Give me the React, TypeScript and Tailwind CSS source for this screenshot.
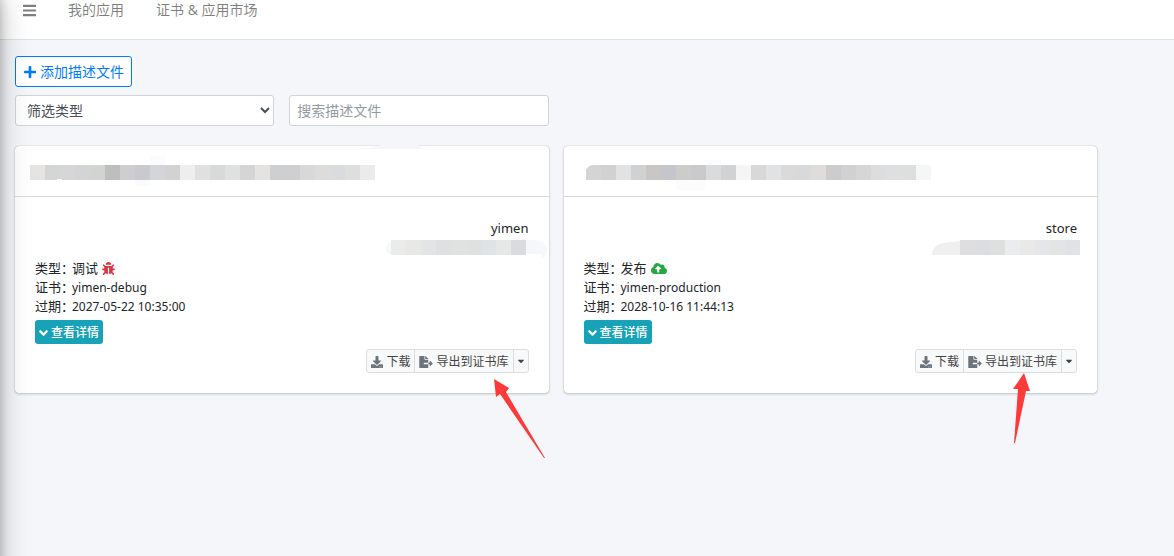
import type { ReactNode } from "react";
import {
  FaAngleDown,
  FaBars,
  FaBug,
  FaCaretDown,
  FaCloudUploadAlt,
  FaDownload,
  FaFileExport,
  FaPlus,
} from "react-icons/fa";

type Profile = {
  name: string;
  kind: string;
  icon: ReactNode;
  cert: string;
  expires: string;
  title: ReactNode;
  team: ReactNode;
  pointer: ReactNode;
};

const CELL = 15;

function Cells({ colors, x = 0, y = 0 }: { colors: string[]; x?: number; y?: number }) {
  return (
    <g shapeRendering="crispEdges">
      {colors.map((fill, i) => (
        <rect key={i} x={x + i * CELL} y={y} width={CELL} height={CELL} fill={fill} />
      ))}
    </g>
  );
}

const debugTitle = [
  "#e6e4e2", "#d4d6d5", "#d6d6d8", "#d3d4d6", "#d2d4d2", "#bebebe", "#cecece", "#c8cacf",
  "#d4d5d8", "#d2d2d2", "#eeeeee", "#e0e0e1", "#d8dad9", "#dfe1e0", "#d5d5d5", "#e5e3e1",
  "#cecfd1", "#cfcfd1", "#d8d8d8", "#dedcda", "#d8dcdf", "#dedede", "#ebebeb",
];

const storeTitle = [
  "#d4d4d4", "#d1d1d1", "#e1e2e4", "#cfd1d3", "#c9c6c4", "#c5c6cc", "#cccccb", "#cacacc",
  "#dadbdd", "#d1d2d4", "#f5f5f5", "#d8d8d8", "#e1e2e4", "#dadada", "#d8d9db", "#dfdcd9",
  "#cccccf", "#cfd1d3", "#d6d6d6", "#dddddd", "#dddfe1", "#dddfde", "#f5f7f6",
];

const profiles: Profile[] = [
  {
    name: "yimen",
    kind: "调试",
    icon: <FaBug className="size-[13px] text-[#dc3545]" />,
    cert: "yimen-debug",
    expires: "2027-05-22 10:35:00",
    title: (
      <svg aria-hidden className="ml-[15px] h-[15px] w-[345px] overflow-visible">
        <path d="M326 -16q14 -1 26 -4h36l6 4z" fill="#f4f6f9" />
        <rect x="120" y="-9" width="15" height="9" fill="#fcfcfc" />
        <rect x="105" y="15" width="15" height="6" fill="#fafbfc" />
        <Cells colors={debugTitle} />
        <rect x="27" y="14" width="5" height="1" fill="#fff" />
      </svg>
    ),
    team: (
      <svg aria-hidden className="-mr-[17px] h-[15px] w-40 overflow-visible">
        <path d="M5 14Q0 14 0 8Q2 1 10 0H150Q159 1 161 9Q161 15 156 18V14z" fill="#f6f7fa" />
        <Cells
          x={5}
          colors={["#e9eceb", "#e8e8e7", "#e3e4e6", "#dfe0e2", "#e0e2e1", "#dfe0e0", "#dfe3e6", "#e6e8e7", "#d9dcdf"]}
        />
      </svg>
    ),
    pointer: (
      <svg
        aria-hidden
        viewBox="0 0 52 80"
        className="pointer-events-none absolute right-1 top-[233px] h-20 w-[52px]"
      >
        <path d="M1 0L16 9L13 13L52 79L51 79L7 15L3 18z" fill="#fd3a3a" />
      </svg>
    ),
  },
  {
    name: "store",
    kind: "发布",
    icon: <FaCloudUploadAlt className="h-[13px] w-4 text-[#28a745]" />,
    cert: "yimen-production",
    expires: "2028-10-16 11:44:13",
    title: (
      <svg aria-hidden className="ml-[22px] h-[15px] w-[345px] overflow-visible">
        <rect x="120" y="-5" width="15" height="5" fill="#fcfcfc" />
        <rect x="90" y="15" width="30" height="10" fill="#fcfcfc" />
        <Cells colors={storeTitle} />
        <path d="M0 0H6Q2 1 0 5z" fill="#fff" />
      </svg>
    ),
    team: (
      <svg aria-hidden className="-mr-[3px] h-[15px] w-[148px] overflow-visible">
        <path d="M0 15Q0 5 11 3L28 1V15z" fill="#efeff0" />
        <Cells
          x={28}
          colors={["#dedee0", "#dadee1", "#dedfdf", "#ebecee", "#e9e9e8", "#e5e6ea", "#e3e4e3", "#e1e2e7"]}
        />
      </svg>
    ),
    pointer: (
      <svg
        aria-hidden
        viewBox="0 0 18 70"
        className="pointer-events-none absolute right-[66px] top-[227px] h-[70px] w-[18px]"
      >
        <path d="M11 0L17 18L13 18L2 70L1 70L5 16L0 16z" fill="#fd3a3a" />
      </svg>
    ),
  },
];

function Row({ label, children }: { label: string; children: ReactNode }) {
  return (
    <div className="flex h-[19px] items-center">
      <dt className="w-[37px] whitespace-nowrap text-[13px]">{label}{"\uff1a"}</dt>
      <dd className="flex items-center gap-1">{children}</dd>
    </div>
  );
}

function ProfileCard({ profile }: { profile: Profile }) {
  return (
    <article className="relative rounded bg-white shadow-[0_0_1px_rgba(0,0,0,0.3),0_1px_3px_rgba(0,0,0,0.2)]">
      <header className="flex h-[51px] items-center border-b border-black/15 pt-[2px]">
        {profile.title}
      </header>
      <div className="p-5">
        <h2 className="text-right text-[13px] leading-[22px]">{profile.name}</h2>
        <div className="flex h-5 justify-end pt-px">{profile.team}</div>
        <dl>
          <Row label="类型">
            <span className="text-[13px]">{profile.kind}</span>
            {profile.icon}
          </Row>
          <Row label="证书">
            <span className="text-xs">{profile.cert}</span>
          </Row>
          <Row label="过期">
            <span className="text-xs">{profile.expires}</span>
          </Row>
        </dl>
        <button
          type="button"
          className="mt-1 flex h-6 items-center gap-[3px] rounded-[3px] bg-[#17a2b8] px-1 pt-0.5 text-xs font-medium text-white"
        >
          <FaAngleDown className="h-[14px] w-[9px]" />
          查看详情
        </button>
        <div className="mt-[5px] flex h-6 justify-end text-xs text-[#444]">
          <button
            type="button"
            className="flex items-center gap-[3px] rounded-l-[3px] border border-[#ddd] bg-[#f8f9fa] px-1 pt-0.5"
          >
            <FaDownload className="size-3 text-[#6c757d]" />
            下载
          </button>
          <button
            type="button"
            className="-ml-px flex items-center gap-[3px] border border-[#ddd] bg-[#f8f9fa] px-1 pt-0.5"
          >
            <FaFileExport className="h-3 w-[14px] text-[#6c757d]" />
            导出到证书库
          </button>
          <button
            type="button"
            aria-label="更多"
            className="-ml-px flex w-4 items-center justify-center rounded-r-[3px] border border-[#ddd] bg-[#f8f9fa]"
          >
            <FaCaretDown className="size-[10px]" />
          </button>
        </div>
      </div>
      {profile.pointer}
    </article>
  );
}

export default function App() {
  return (
    <div className="relative min-h-screen overflow-hidden bg-[#f4f6f9] font-['Noto_Sans','Noto_Sans_CJK_SC',sans-serif] text-[#212529]">
      {/* collapsed sidebar, only its shadow reaches the page */}
      <aside className="pointer-events-none absolute -bottom-8 -left-64 -top-4 z-10 w-64 shadow-[0_14px_28px_rgba(0,0,0,0.25),0_10px_10px_rgba(0,0,0,0.22)]" />

      <nav className="flex h-10 items-start border-b border-[#dee2e6] bg-white pl-[23px] text-sm leading-5 text-black/50">
        <button type="button" aria-label="菜单" className="flex h-5 items-center">
          <FaBars className="h-[15px] w-[13px]" />
        </button>
        <a href="#apps" className="ml-8">
          我的应用
        </a>
        <a href="#market" className="ml-8">
          证书 &amp; 应用市场
        </a>
      </nav>

      <main className="pb-4 pl-[15px] pr-[77px] pt-4">
        <button
          type="button"
          className="flex h-[31px] items-center gap-[3px] rounded-[3px] border border-[#007bff] bg-white px-[7px] text-sm text-[#007bff]"
        >
          <FaPlus className="size-[14px]" />
          添加描述文件
        </button>

        <div className="mt-2 grid grid-cols-4 gap-[15px]">
          <select
            aria-label="筛选类型"
            className="h-[31px] rounded-[3px] border border-[#ced4da] bg-white px-[7px] text-sm text-[#495057]"
          >
            <option>筛选类型</option>
          </select>
          <input
            type="text"
            aria-label="搜索描述文件"
            placeholder="搜索描述文件"
            className="h-[31px] rounded-[3px] border border-[#ced4da] bg-white px-[7px] text-sm placeholder:text-[#939ba2]"
          />
        </div>

        <div className="mt-5 grid grid-cols-2 gap-[15px]">
          {profiles.map((p) => (
            <ProfileCard key={p.name} profile={p} />
          ))}
        </div>
      </main>
    </div>
  );
}
